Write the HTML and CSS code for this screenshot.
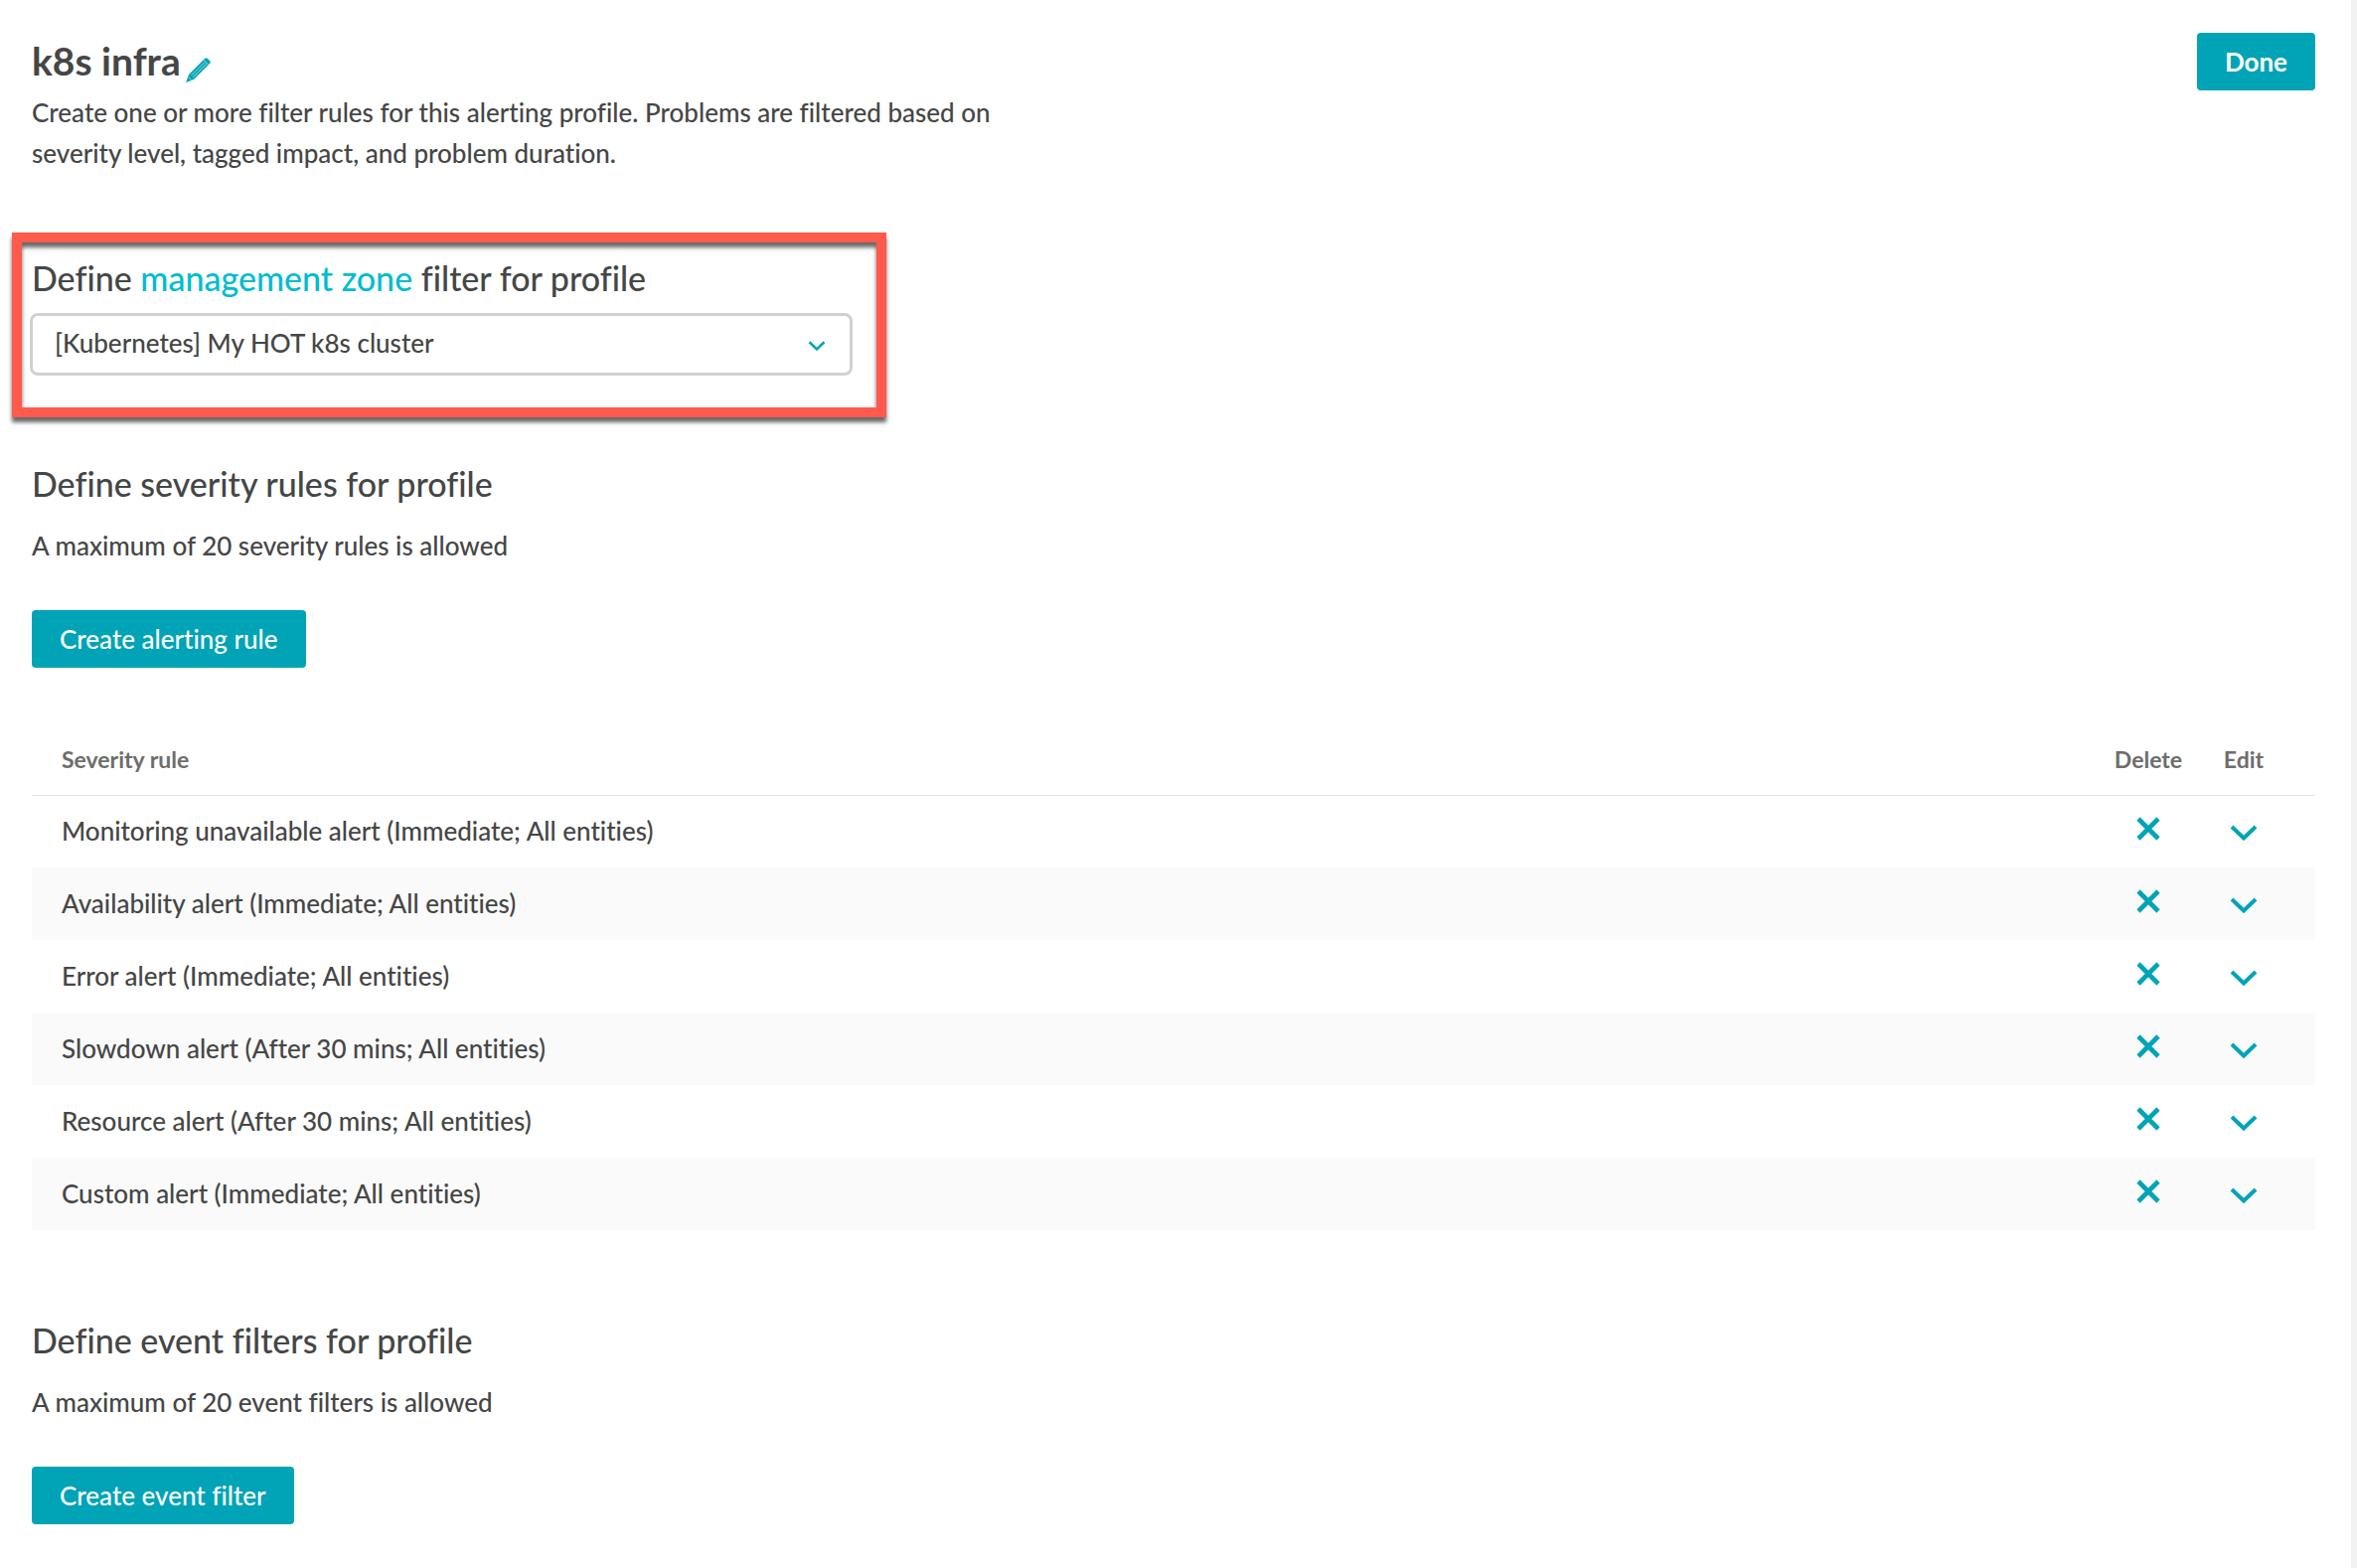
FILE: index.html
```html
<!DOCTYPE html>
<html lang="en">
<head>
    <meta charset="UTF-8">
    <meta name="viewport" content="width=device-width, initial-scale=1.0">
    <title>Alerting profile | k8s infra</title>
    <link rel="stylesheet" href="styles.css">
</head>
<body>
    <!-- Shared icons -->
    <svg class="sprite" aria-hidden="true">
        <symbol id="icon-delete" viewBox="0 0 24 24">
            <path d="M2 2 L22 22 M22 2 L2 22" fill="none" stroke="currentColor" stroke-width="4.6"/>
        </symbol>
        <symbol id="icon-chevron" viewBox="0 0 28 16">
            <path d="M2 2 L14 13.5 L26 2" fill="none" stroke="currentColor" stroke-width="4"/>
        </symbol>
    </svg>

    <main>
        <!-- Profile header -->
        <header class="profile-header">
            <div class="profile-info">
                <h1>k8s infra
                    <button type="button" class="icon-button rename" aria-label="Rename profile">
                        <svg class="pencil" viewBox="0 0 25 25">
                            <path d="M0 25 L3 17 L19 1 Q20.500 -0.500 22 1 L24 3 Q25.500 4.500 24 6 L8 22 Z" fill="currentColor"/>
                            <path d="M5.500 18 L19 4.500 M7.200 19.800 L20.700 6.300 M18 2.500 L22.500 7 M2.500 19.500 L5.500 22.500" fill="none" stroke="#fff" stroke-width="0.600"/>
                        </svg>
                    </button>
                </h1>
                <p>Create one or more filter rules for this alerting profile. Problems are filtered based on severity level, tagged impact, and problem duration.</p>
            </div>
            <button type="button" class="btn btn-done">Done</button>
        </header>

        <!-- Management zone -->
        <section class="zone-filter">
            <h2><label for="zone">Define <a href="#zones">management zone</a> filter for profile</label></h2>
            <div class="select-box">
                <select id="zone">
                    <option>[Kubernetes] My HOT k8s cluster</option>
                </select>
                <svg class="select-arrow"><use href="#icon-chevron"/></svg>
            </div>
        </section>

        <!-- Severity rules -->
        <section class="rules">
            <h2>Define severity rules for profile</h2>
            <p>A maximum of 20 severity rules is allowed</p>
            <button type="button" class="btn">Create alerting rule</button>

            <table>
                <thead>
                    <tr>
                        <th class="rule">Severity rule</th>
                        <th class="delete">Delete</th>
                        <th class="edit">Edit</th>
                    </tr>
                </thead>
                <tbody>
                    <tr>
                        <td class="rule">Monitoring unavailable alert (Immediate; All entities)</td>
                        <td class="delete"><button type="button" class="icon-button" aria-label="Delete"><svg class="cross"><use href="#icon-delete"/></svg></button></td>
                        <td class="edit"><button type="button" class="icon-button" aria-label="Edit"><svg class="chevron"><use href="#icon-chevron"/></svg></button></td>
                    </tr>
                    <tr>
                        <td class="rule">Availability alert (Immediate; All entities)</td>
                        <td class="delete"><button type="button" class="icon-button" aria-label="Delete"><svg class="cross"><use href="#icon-delete"/></svg></button></td>
                        <td class="edit"><button type="button" class="icon-button" aria-label="Edit"><svg class="chevron"><use href="#icon-chevron"/></svg></button></td>
                    </tr>
                    <tr>
                        <td class="rule">Error alert (Immediate; All entities)</td>
                        <td class="delete"><button type="button" class="icon-button" aria-label="Delete"><svg class="cross"><use href="#icon-delete"/></svg></button></td>
                        <td class="edit"><button type="button" class="icon-button" aria-label="Edit"><svg class="chevron"><use href="#icon-chevron"/></svg></button></td>
                    </tr>
                    <tr>
                        <td class="rule">Slowdown alert (After 30 mins; All entities)</td>
                        <td class="delete"><button type="button" class="icon-button" aria-label="Delete"><svg class="cross"><use href="#icon-delete"/></svg></button></td>
                        <td class="edit"><button type="button" class="icon-button" aria-label="Edit"><svg class="chevron"><use href="#icon-chevron"/></svg></button></td>
                    </tr>
                    <tr>
                        <td class="rule">Resource alert (After 30 mins; All entities)</td>
                        <td class="delete"><button type="button" class="icon-button" aria-label="Delete"><svg class="cross"><use href="#icon-delete"/></svg></button></td>
                        <td class="edit"><button type="button" class="icon-button" aria-label="Edit"><svg class="chevron"><use href="#icon-chevron"/></svg></button></td>
                    </tr>
                    <tr>
                        <td class="rule">Custom alert (Immediate; All entities)</td>
                        <td class="delete"><button type="button" class="icon-button" aria-label="Delete"><svg class="cross"><use href="#icon-delete"/></svg></button></td>
                        <td class="edit"><button type="button" class="icon-button" aria-label="Edit"><svg class="chevron"><use href="#icon-chevron"/></svg></button></td>
                    </tr>
                </tbody>
            </table>
        </section>

        <!-- Event filters -->
        <section class="filters">
            <h2>Define event filters for profile</h2>
            <p>A maximum of 20 event filters is allowed</p>
            <button type="button" class="btn">Create event filter</button>
        </section>
    </main>
</body>
</html>
```

FILE: styles.css
```css
/* Reset and Base Styles */
* {
    margin: 0;
    padding: 0;
    box-sizing: border-box;
}

body {
    font-family: Lato, "Noto Sans", sans-serif;
    font-size: 26px;
    font-weight: 500;
    font-variant-ligatures: none;
    line-height: 41px;
    color: #454646;
    background: #fff;
}

main {
    min-height: 100vh;
    padding: 33px 36px 40px 32px;
    border-right: 6px solid #f2f2f2;
}

h1 {
    display: flex;
    align-items: center;
    gap: 5px;
    margin-bottom: 4px;
    font-size: 39px;
    font-weight: 700;
    line-height: 56px;
}

h2 {
    font-size: 34px;
    font-weight: 500;
    line-height: 48px;
}

a {
    color: #00bcd0;
    text-decoration: none;
}

.sprite {
    position: absolute;
    width: 0;
    height: 0;
}

/* Buttons */
.btn {
    height: 58px;
    padding: 0 28px;
    border: none;
    border-radius: 4px;
    background: #00a4b6;
    color: #fff;
    font: inherit;
    cursor: pointer;
}

.btn-done {
    font-weight: 700;
}

.icon-button {
    display: inline-flex;
    border: none;
    background: none;
    color: #00a4b6;
    cursor: pointer;
}

/* Profile header */
.profile-header {
    display: flex;
    justify-content: space-between;
    align-items: flex-start;
}

.profile-info {
    max-width: 1000px;
}

.rename {
    padding-top: 18px;
}

.pencil {
    width: 25px;
    height: 25px;
}

/* Management zone */
.zone-filter {
    width: 880px;
    margin: 59px 0 0 -20px;
    padding: 12px 24px 32px 8px;
    border: 10px solid #ff5a4c;
    box-shadow: 0 5px 4px rgba(0, 0, 0, 0.6), inset 0 5px 4px rgba(0, 0, 0, 0.6);
}

.zone-filter h2 {
    padding-left: 2px;
}

.select-box {
    position: relative;
    margin-top: 11px;
}

select {
    appearance: none;
    display: block;
    width: 100%;
    height: 63px;
    padding: 0 60px 3px 22px;
    border: 3px solid #d1d1d1;
    border-radius: 8px;
    background: #fff;
    color: inherit;
    font: inherit;
}

.select-arrow {
    position: absolute;
    top: 28px;
    right: 27px;
    width: 18px;
    height: 10px;
    color: #00a4b6;
    pointer-events: none;
}

/* Rules */
.rules {
    margin-top: 43px;
}

.rules p,
.filters p {
    margin: 18px 0 44px;
}

/* Table */
table {
    width: 100%;
    margin-top: 57px;
    border-collapse: collapse;
}

th {
    height: 71px;
    border-bottom: 1px solid #e3e3e3;
    color: #6d6d6d;
    font-size: 23px;
    font-weight: 700;
}

td {
    height: 73px;
}

tbody tr:nth-child(even) {
    background: #fafafa;
}

.rule {
    padding-left: 30px;
    text-align: left;
}

.delete {
    width: 96px;
    text-align: center;
}

.edit {
    width: 120px;
    padding-right: 24px;
    text-align: center;
}

.cross {
    width: 24px;
    height: 24px;
}

.chevron {
    width: 28px;
    height: 16px;
}

/* Event filters */
.filters {
    margin-top: 87px;
}
```
